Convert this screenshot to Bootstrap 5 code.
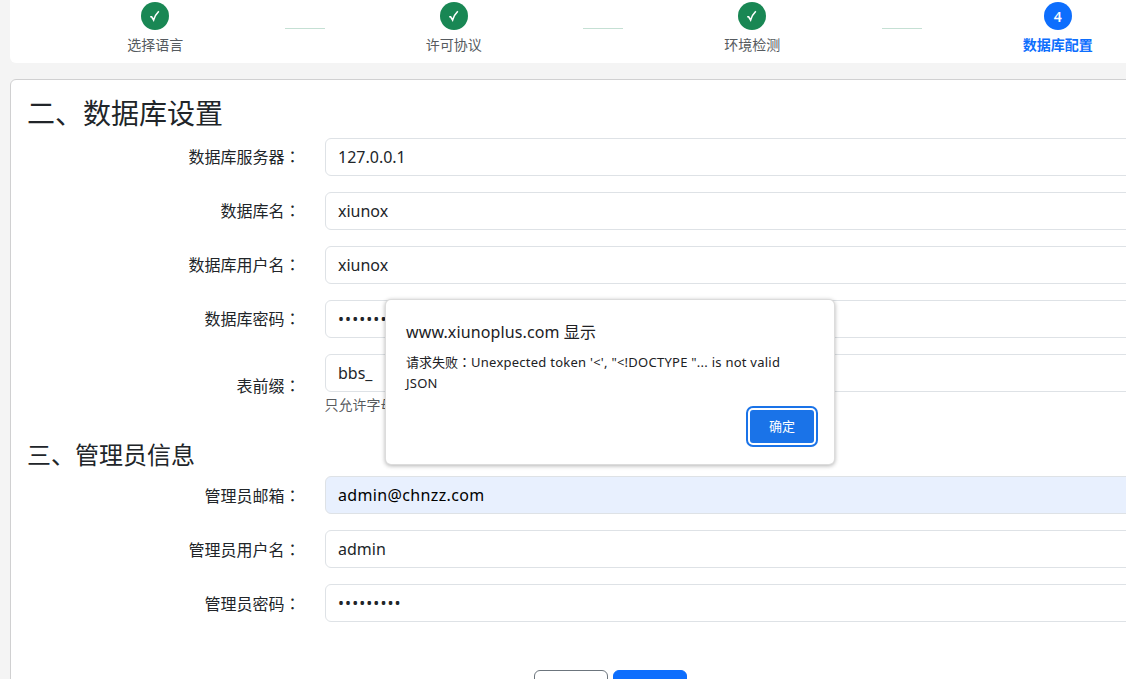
<!DOCTYPE html>
<html lang="zh-CN">
<head>
<meta charset="utf-8">
<meta name="viewport" content="width=device-width, initial-scale=1">
<title>数据库配置</title>
<link href="https://cdn.jsdelivr.net/npm/bootstrap@5.3.0/dist/css/bootstrap.min.css" rel="stylesheet">
<style>
  body { background: #f4f4f4; overflow: hidden; height: 679px; font-family: "Noto Sans", "Noto Sans CJK SC", sans-serif; }
  .viewport { height: 679px; }
  .install-page { width: 1200px; margin-left: 10px; }
  .steps { border-radius: 0 0 6px 6px; padding: 2px 16px 8px; }
  .step-dot { width: 28px; height: 28px; font-size: 14px; font-weight: 600; }
  .step-label { font-size: 14px; line-height: 21px; margin-top: 4px; color: #565b60; }
  .step-label.current { color: #0d6efd; font-weight: 700; }
  .step-line { width: 40px; height: 1px; background: #c5e0d4; margin-top: 26px; }
  .card { border-color: #d0d0d1; }
  h3 { font-size: 28px; font-weight: 400; padding-top: 1px; margin-bottom: 7px; }
  h4 { font-size: 24px; font-weight: 400; margin: 24px 0 7px; }
  .col-form-label { line-height: 22px; }
  .form-control { height: 38px; padding-left: 12.5px; }
  .form-control.autofilled { background: #e8f0fe; color: #000; letter-spacing: .35px; }
  .form-control.secret { letter-spacing: 1.05px; }
  .colon { font-family: "Noto Sans CJK TC", sans-serif; }
  .form-text { line-height: 21px; font-size: 14px; margin-top: 2px; margin-bottom: 2px; height: 21px; }
  .foot-btn { width: 74px; height: 38px; }
  .alert-box { left: 386px; top: 300px; width: 448px; height: 164px; border-radius: 5px; color: #202124; padding: 21px 20px 0; box-shadow: 0 0 0 1px #dcdcdc, 0 1px 4px 1px rgba(0,0,0,.3); }
  .alert-title { font-size: 16px; line-height: 22px; letter-spacing: .12px; }
  .alert-text { font-size: 13px; line-height: 21px; margin-top: 8px; }
  .alert-text .latin { letter-spacing: .25px; }
  .ok-btn { right: 20px; top: 110px; width: 64px; height: 33px; border: 0; border-radius: 3px; background: #1a73e8; color: #fff; font-size: 13px; box-shadow: 0 0 0 2px #fff, 0 0 0 4px #1a73e8; }
</style>
</head>
<body>
<div class="viewport overflow-hidden">
<div class="install-page">
  <div class="steps bg-white d-flex mb-3">
    <div class="flex-fill d-flex flex-column align-items-center">
      <div class="step-dot rounded-circle text-bg-success d-flex align-items-center justify-content-center"><svg width="12" height="12" viewBox="0 0 12 12" fill="none" stroke="#fff" stroke-width="1.6"><path d="M1.2 6.8 2.6 6.8 4.6 10 Q6 5 9.8 1.2"/></svg></div>
      <div class="step-label">选择语言</div>
    </div>
    <div class="step-line"></div>
    <div class="flex-fill d-flex flex-column align-items-center">
      <div class="step-dot rounded-circle text-bg-success d-flex align-items-center justify-content-center"><svg width="12" height="12" viewBox="0 0 12 12" fill="none" stroke="#fff" stroke-width="1.6"><path d="M1.2 6.8 2.6 6.8 4.6 10 Q6 5 9.8 1.2"/></svg></div>
      <div class="step-label">许可协议</div>
    </div>
    <div class="step-line"></div>
    <div class="flex-fill d-flex flex-column align-items-center">
      <div class="step-dot rounded-circle text-bg-success d-flex align-items-center justify-content-center"><svg width="12" height="12" viewBox="0 0 12 12" fill="none" stroke="#fff" stroke-width="1.6"><path d="M1.2 6.8 2.6 6.8 4.6 10 Q6 5 9.8 1.2"/></svg></div>
      <div class="step-label">环境检测</div>
    </div>
    <div class="step-line"></div>
    <div class="flex-fill d-flex flex-column align-items-center">
      <div class="step-dot rounded-circle text-bg-primary d-flex align-items-center justify-content-center">4</div>
      <div class="step-label current">数据库配置</div>
    </div>
  </div>

  <div class="card">
    <form class="card-body">
      <h3>二、数据库设置</h3>
      <div class="row mb-3 align-items-center">
        <label class="col-3 col-form-label text-end">数据库服务器<span class="colon" lang="zh-TW">：</span></label>
        <div class="col-9"><input class="form-control" type="text" value="127.0.0.1"></div>
      </div>
      <div class="row mb-3 align-items-center">
        <label class="col-3 col-form-label text-end">数据库名<span class="colon" lang="zh-TW">：</span></label>
        <div class="col-9"><input class="form-control" type="text" value="xiunox"></div>
      </div>
      <div class="row mb-3 align-items-center">
        <label class="col-3 col-form-label text-end">数据库用户名<span class="colon" lang="zh-TW">：</span></label>
        <div class="col-9"><input class="form-control" type="text" value="xiunox"></div>
      </div>
      <div class="row mb-3 align-items-center">
        <label class="col-3 col-form-label text-end">数据库密码<span class="colon" lang="zh-TW">：</span></label>
        <div class="col-9"><input class="form-control secret" type="password" value="xiunoxdbs"></div>
      </div>
      <div class="row align-items-center">
        <label class="col-3 col-form-label text-end">表前缀<span class="colon" lang="zh-TW">：</span></label>
        <div class="col-9"><input class="form-control" type="text" value="bbs_"><div class="form-text">只允许字母</div></div>
      </div>
      <h4>三、管理员信息</h4>
      <div class="row mb-3 align-items-center">
        <label class="col-3 col-form-label text-end">管理员邮箱<span class="colon" lang="zh-TW">：</span></label>
        <div class="col-9"><input class="form-control autofilled" type="text" value="admin@chnzz.com"></div>
      </div>
      <div class="row mb-3 align-items-center">
        <label class="col-3 col-form-label text-end">管理员用户名<span class="colon" lang="zh-TW">：</span></label>
        <div class="col-9"><input class="form-control" type="text" value="admin"></div>
      </div>
      <div class="row mb-3 align-items-center">
        <label class="col-3 col-form-label text-end">管理员密码<span class="colon" lang="zh-TW">：</span></label>
        <div class="col-9"><input class="form-control secret" type="password" value="adminpass"></div>
      </div>
      <div class="d-flex justify-content-center mt-5" style="gap:5px">
        <button type="button" class="btn btn-outline-secondary foot-btn"></button>
        <button type="button" class="btn btn-primary foot-btn"></button>
      </div>
    </form>
  </div>
</div>
</div>

<div class="alert-box position-absolute bg-white" role="alertdialog">
  <div class="alert-title">www.xiunoplus.com 显示</div>
  <div class="alert-text">请求失败<span class="colon" lang="zh-TW">：</span><span class="latin">Unexpected token '&lt;', "&lt;!DOCTYPE "... is not valid<br>JSON</span></div>
  <button type="button" class="ok-btn position-absolute">确定</button>
</div>
<script src="https://cdn.jsdelivr.net/npm/bootstrap@5.3.0/dist/js/bootstrap.bundle.min.js"></script>
</body>
</html>
